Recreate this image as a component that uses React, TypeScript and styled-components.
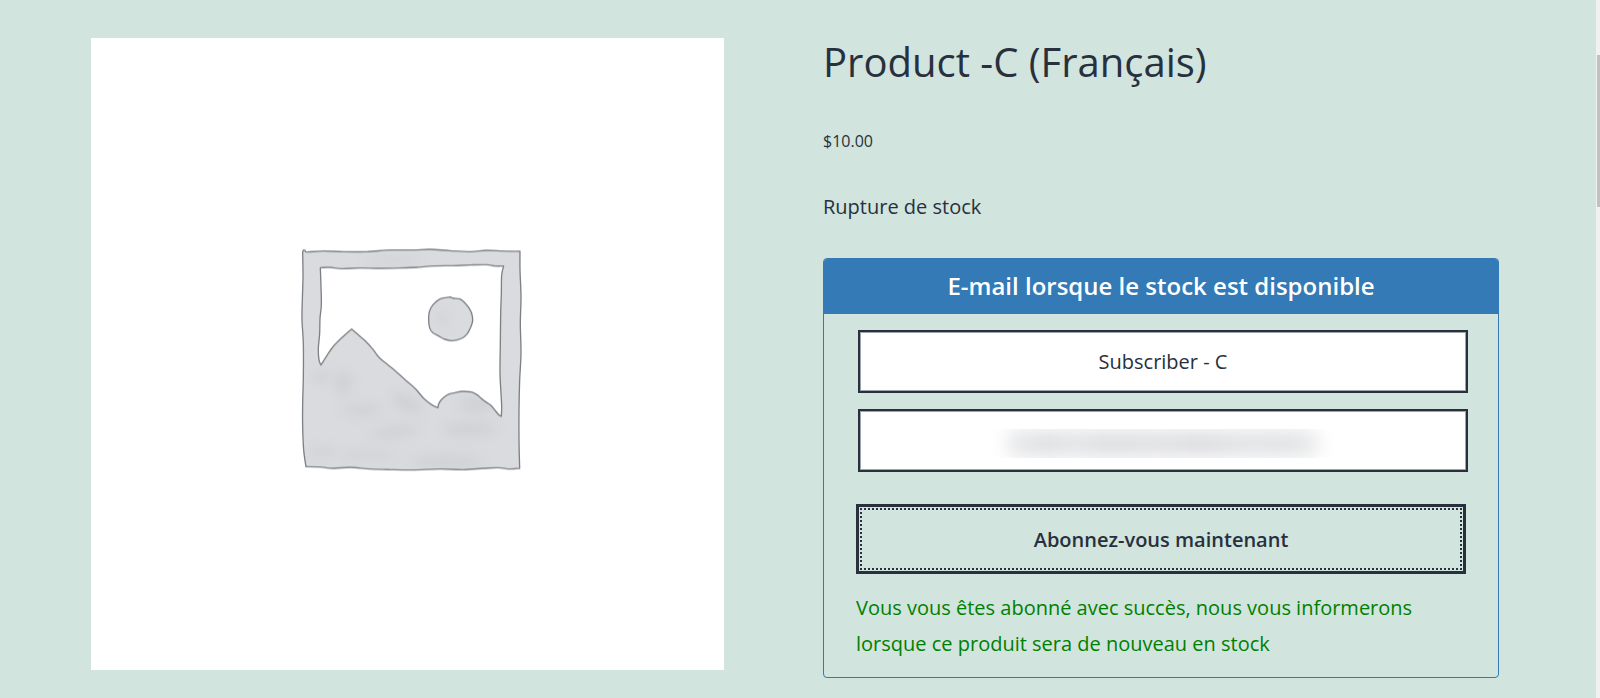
import React from 'react';
import styled, { createGlobalStyle } from 'styled-components';

const GlobalStyle = createGlobalStyle`
  *, *::before, *::after { box-sizing: border-box; }
  body {
    margin: 0;
    background: #d1e4dd;
    color: #28303d;
    font-family: 'Segoe UI', 'Open Sans', 'Noto Sans', sans-serif;
    font-size: 20px;
    line-height: 36px;
  }
`;

const Page = styled.div`
  display: flex;
  min-height: 100vh;
`;

const Product = styled.main`
  flex: 1;
  display: grid;
  grid-template-columns: 633fr 676fr;
  align-items: start;
  column-gap: 99px;
  padding: 38px 97px 20px 91px;
`;

const ScrollTrack = styled.div`
  width: 4px;
  padding: 55px 0 0 1px;
  background: #f1f1f1;
`;

const ScrollThumb = styled.div`
  height: 152px;
  background: #c1c1c1;
`;

const Gallery = styled.figure`
  margin: 0;
  background: #fff;
  svg { display: block; width: 100%; height: auto; }
`;

const Summary = styled.section`
  min-width: 0;
`;

const Title = styled.h1`
  margin: 0;
  font-size: 40px;
  font-weight: 400;
  line-height: 48px;
`;

const Price = styled.p`
  margin: 38px 0 0;
  font-size: 16px;
  line-height: 34px;
`;

const Stock = styled.p`
  margin: 31px 0 0;
`;

const Panel = styled.form`
  margin: 33px 0 0;
  border: 1px solid #337ab7;
  border-radius: 4px;
  overflow: hidden;
`;

const PanelHeading = styled.h2`
  margin: 0;
  padding: 9px 16px 10px;
  background: #337ab7;
  color: #fff;
  font-size: 24px;
  font-weight: 600;
  line-height: 36px;
  text-align: center;
`;

const PanelBody = styled.div`
  padding: 16px 32px 15px;
`;

const Fields = styled.div`
  display: grid;
  gap: 16px;
  margin: 0 -2px 0 2px;
`;

const Field = styled.div`
  position: relative;
  display: grid;
`;

const TextInput = styled.input`
  width: 100%;
  height: 63px;
  padding: 8px;
  border: 2px solid #28303d;
  outline: 1px solid #9aa5aa;
  outline-offset: -3px;
  border-radius: 0;
  background: #fff;
  color: #28303d;
  font: inherit;
  text-align: center;
`;

const Redaction = styled.div`
  position: absolute;
  inset: 20px 22% 14px 22%;
  overflow: hidden;
  pointer-events: none;
  &::before {
    content: '';
    position: absolute;
    inset: 1px 14px;
    border-radius: 12px;
    background: linear-gradient(90deg, #e8e9ea, #dfe0e2 14%, #e4e5e7 22%, #dedfe1 32%, #e1e2e4 50%, #dddee0 62%, #e3e4e6 75%, #e2e3e5 90%, #eaebec);
    filter: blur(9px);
  }
`;

const SubmitButton = styled.button`
  display: block;
  width: 100%;
  height: 70px;
  margin: 32px 0 0;
  padding: 1px 16px 0;
  border: 3px solid #28303d;
  border-radius: 0;
  outline: 2px dotted #28303d;
  outline-offset: -6px;
  background: transparent;
  color: #28303d;
  font: inherit;
  font-weight: 600;
`;

const Message = styled.p`
  margin: 16px 0 0;
  color: #008000;
`;

type Point = [number, number];

/* Joins hand-drawn edges into one outline: soft within an edge, sharp where edges meet. */
function outline(edges: Point[][]): string {
  const parts = edges.map((edge) =>
    edge.slice(1).map((end, i) => {
      const start = edge[i];
      const before = edge[i - 1] ?? start;
      const after = edge[i + 2] ?? end;
      const c1 = [start[0] + (end[0] - before[0]) / 6, start[1] + (end[1] - before[1]) / 6];
      const c2 = [end[0] - (after[0] - start[0]) / 6, end[1] - (after[1] - start[1]) / 6];
      return `C${c1.join(' ')} ${c2.join(' ')} ${end.join(' ')}`;
    }).join(' '),
  );
  return `M${edges[0][0].join(' ')} ${parts.join(' ')} Z`;
}

const frame = outline([
  [[68, 66], [71, 60], [76, 62], [81, 66], [130, 63], [190, 65], [260, 65], [330, 60], [400, 60], [450, 58], [510, 62], [570, 65], [620, 61], [670, 63], [720, 64]],
  [[720, 64], [720, 120], [723, 200], [721, 280], [723, 370], [719, 450], [717, 540], [717, 630], [719, 715]],
  [[719, 715], [690, 717], [655, 713], [610, 715], [550, 719], [480, 717], [400, 720], [330, 719], [270, 717], [210, 712], [160, 715], [120, 711], [78, 710]],
  [[78, 710], [71, 660], [68, 590], [68, 520], [70, 440], [70, 340], [66, 270], [67, 210], [69, 140], [68, 66]],
]);

const opening = outline([
  [[121, 113], [150, 112], [185, 116], [240, 114], [300, 115], [360, 114], [410, 112], [460, 108], [520, 107], [570, 105], [620, 104], [645, 108], [671, 108]],
  [[671, 108], [665, 135], [664, 190], [662, 250], [661, 340], [660, 430], [663, 490], [665, 530], [664, 559]],
  [[664, 559], [655, 553], [642, 537], [630, 524], [612, 512], [592, 495], [575, 486]],
  [[575, 486], [550, 484], [525, 488], [503, 494], [485, 508], [476, 522], [474, 533]],
  [[474, 533], [455, 524], [432, 506], [408, 478], [380, 453], [350, 426], [322, 403], [297, 382], [278, 357], [255, 332], [230, 310], [215, 297]],
  [[215, 297], [190, 319], [160, 349], [140, 378], [123, 405]],
  [[123, 405], [117, 390], [115, 355], [119, 310], [120, 265], [124, 225], [123, 170], [121, 113]],
]);

const sun = outline([
  [[511, 201], [521, 205], [540, 207], [555, 219], [567, 234], [575, 250], [578, 272], [572, 292], [562, 311], [545, 325], [517, 332], [495, 328], [476, 318], [458, 308], [449, 294], [446, 270], [448, 245], [459, 224], [480, 207], [511, 201]],
]);

function PlaceholderImage() {
  return (
    <svg viewBox="-567 -576 1899 1896" role="img" aria-label="En attente de l’image du produit">
      <defs>
        <filter id="wash" x="-100%" y="-200%" width="300%" height="500%">
          <feGaussianBlur stdDeviation="16" />
        </filter>
        <clipPath id="frame">
          <path d={`${frame} ${opening}`} clipRule="evenodd" />
        </clipPath>
      </defs>
      <path d={`${frame} ${opening}`} fill="#dadbdf" fillRule="evenodd" />
      <g clipPath="url(#frame)">
        <g filter="url(#wash)" fill="#c9cacf" opacity="0.6">
          <ellipse cx="190" cy="460" rx="24" ry="38" />
          <ellipse cx="380" cy="520" rx="50" ry="22" transform="rotate(30 380 520)" />
          <ellipse cx="245" cy="540" rx="60" ry="16" />
          <ellipse cx="345" cy="605" rx="75" ry="15" transform="rotate(-8 345 605)" />
          <ellipse cx="570" cy="598" rx="80" ry="20" />
          <ellipse cx="500" cy="695" rx="110" ry="18" />
          <ellipse cx="260" cy="675" rx="90" ry="10" />
          <ellipse cx="125" cy="440" rx="28" ry="16" />
          <ellipse cx="125" cy="665" rx="45" ry="12" />
          <ellipse cx="590" cy="525" rx="50" ry="24" />
          <ellipse cx="340" cy="92" rx="85" ry="9" />
        </g>
      </g>
      <g fill="none" stroke="#7c8186" strokeWidth="4" strokeLinejoin="round">
        <path d={frame} />
        <path d={opening} />
        <path d={sun} fill="#dadbdf" />
      </g>
      <ellipse cx="488" cy="265" rx="15" ry="25" fill="#c9cacf" opacity="0.5" filter="url(#wash)" />
    </svg>
  );
}

export default function App() {
  return (
    <>
      <GlobalStyle />
      <Page>
        <Product>
          <Gallery>
            <PlaceholderImage />
          </Gallery>
          <Summary>
            <Title>Product -C (Français)</Title>
            <Price>$10.00</Price>
            <Stock>Rupture de stock</Stock>
            <Panel onSubmit={(event: React.FormEvent) => event.preventDefault()}>
              <PanelHeading>E-mail lorsque le stock est disponible</PanelHeading>
              <PanelBody>
                <Fields>
                  <Field>
                    <TextInput type="text" aria-label="Nom" defaultValue="Subscriber - C" />
                  </Field>
                  <Field>
                    <TextInput type="email" aria-label="Adresse e-mail" />
                    <Redaction aria-hidden="true" />
                  </Field>
                </Fields>
                <SubmitButton type="submit">Abonnez-vous maintenant</SubmitButton>
                <Message role="status">
                  Vous vous êtes abonné avec succès, nous vous informerons lorsque ce produit sera de nouveau en stock
                </Message>
              </PanelBody>
            </Panel>
          </Summary>
        </Product>
        <ScrollTrack aria-hidden="true">
          <ScrollThumb />
        </ScrollTrack>
      </Page>
    </>
  );
}
